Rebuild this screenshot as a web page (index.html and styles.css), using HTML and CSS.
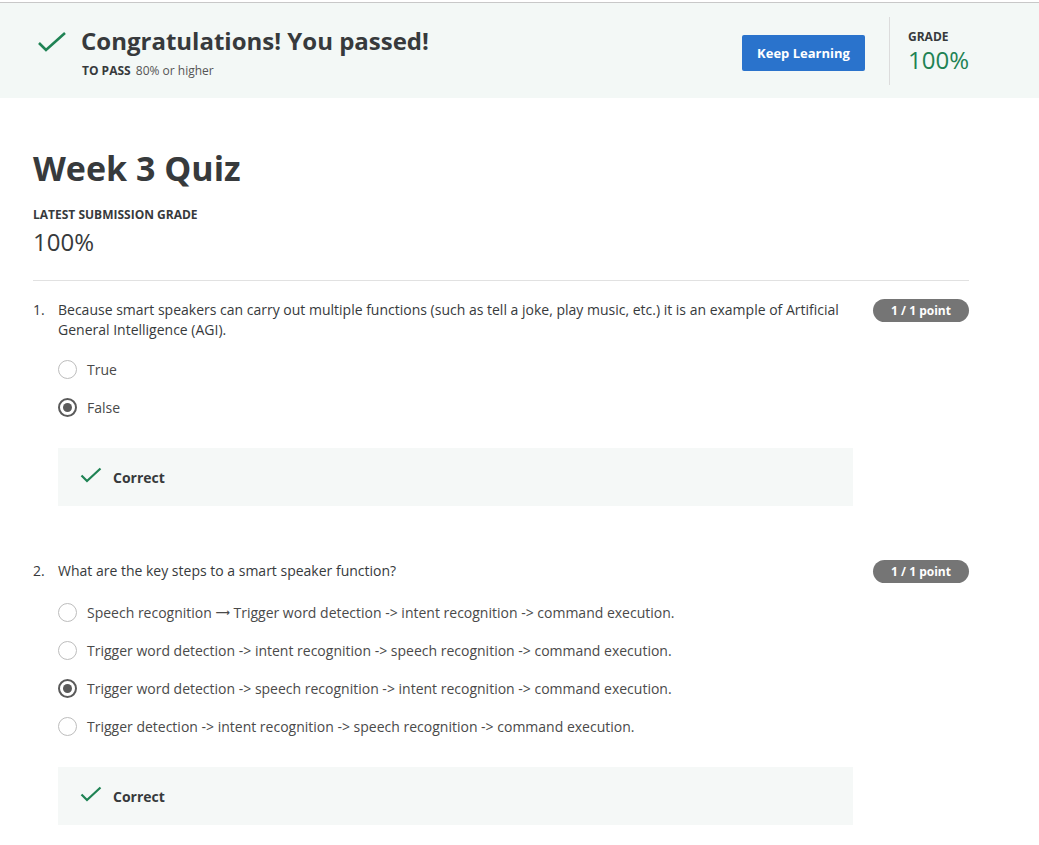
FILE: index.html
```html
<!DOCTYPE html>
<html>
<head>
<meta charset="utf-8">
<link rel="stylesheet" href="styles.css">
</head>
<body>
<div class="topline"></div>
<header class="banner">
  <div class="banner-left">
    <svg class="big-check" width="30" height="22" viewBox="0 0 30 22"><path d="M2 12 L9 19 L28 2" fill="none" stroke="#1f8354" stroke-width="2.6"/></svg>
    <div>
      <h1 class="congrats">Congratulations! You passed!</h1>
      <div class="topass"><b>TO PASS</b> 80% or higher</div>
    </div>
  </div>
  <div class="banner-right">
    <button class="keep">Keep Learning</button>
    <div class="divider"></div>
    <div class="grade">
      <div class="label">GRADE</div>
      <div class="grade-val">100%</div>
    </div>
  </div>
</header>
<main class="content">
  <h2 class="title">Week 3 Quiz</h2>
  <div class="label sub">LATEST SUBMISSION GRADE</div>
  <div class="latest">100%</div>
  <hr class="rule">

  <section class="question">
    <div class="qhead">
      <span class="num">1.</span>
      <p class="qtext">Because smart speakers can carry out multiple functions (such as tell a joke, play music, etc.) it is an example of Artificial General Intelligence (AGI).</p>
      <span class="badge">1 / 1 point</span>
    </div>
    <div class="options">
      <div class="opt"><span class="radio"></span>True</div>
      <div class="opt"><span class="radio on"></span>False</div>
    </div>
    <div class="correct">
      <svg width="22" height="16" viewBox="0 0 22 16"><path d="M1.5 8.5 L7 14 L20.5 1.5" fill="none" stroke="#1f8354" stroke-width="2.2"/></svg>
      <span>Correct</span>
    </div>
  </section>

  <section class="question q2">
    <div class="qhead">
      <span class="num">2.</span>
      <p class="qtext">What are the key steps to a smart speaker function?</p>
      <span class="badge">1 / 1 point</span>
    </div>
    <div class="options">
      <div class="opt"><span class="radio"></span>Speech recognition <span class="arrow">⟶</span> Trigger word detection -&gt; intent recognition -&gt; command execution.</div>
      <div class="opt"><span class="radio"></span>Trigger word detection -&gt; intent recognition -&gt; speech recognition -&gt; command execution.</div>
      <div class="opt"><span class="radio on"></span>Trigger word detection -&gt; speech recognition -&gt; intent recognition -&gt; command execution.</div>
      <div class="opt"><span class="radio"></span>Trigger detection -&gt; intent recognition -&gt; speech recognition -&gt; command execution.</div>
    </div>
    <div class="correct">
      <svg width="22" height="16" viewBox="0 0 22 16"><path d="M1.5 8.5 L7 14 L20.5 1.5" fill="none" stroke="#1f8354" stroke-width="2.2"/></svg>
      <span>Correct</span>
    </div>
  </section>
</main>
</body>
</html>
```
FILE: styles.css
```css
* { box-sizing: border-box; }
body {
  margin: 0;
  font-family: "Open Sans", "Noto Sans", sans-serif;
  color: #373a3c;
  background: #fff;
}
.topline {
  height: 3px;
  border-bottom: 1px solid #c8c8c8;
  background: #fff;
}
.banner {
  background: #f3f8f6;
  height: 95px;
  display: flex;
  justify-content: space-between;
  padding: 0 70px 0 37px;
}
.banner-left {
  display: flex;
  align-items: flex-start;
  padding-top: 23px;
}
.big-check { margin-top: 5px; margin-right: 14px; }
.congrats {
  margin: 0;
  font-size: 24px;
  font-weight: 700;
  line-height: 30px;
  color: #373a3c;
}
.topass {
  font-size: 12px;
  margin-top: 6px;
  margin-left: 1px;
  color: #555;
}
.topass b { color: #373a3c; margin-right: 2px; }
.banner-right {
  display: flex;
  align-items: flex-start;
}
.keep {
  background: #2a73cc;
  color: #fff;
  border: none;
  border-radius: 2px;
  width: 123px;
  height: 36px;
  font-family: inherit;
  font-size: 13px;
  font-weight: 700;
  margin-top: 32px;
}
.divider {
  width: 1px;
  height: 68px;
  background: #dcdcdc;
  margin: 14px 18px 0 24px;
}
.grade { padding-top: 25px; }
.label {
  font-size: 12px;
  font-weight: 700;
  color: #373a3c;
}
.grade-val {
  font-size: 24px;
  color: #1f8354;
  line-height: 30px;
  font-weight: 400;
}
.content {
  padding: 0 70px 0 33px;
}
.title {
  font-size: 34px;
  font-weight: 700;
  margin: 47px 0 0;
  line-height: 46px;
}
.sub { margin-top: 15px; }
.latest {
  font-size: 24px;
  line-height: 30px;
  margin-top: 4px;
  font-weight: 400;
}
.rule {
  border: none;
  border-top: 1px solid #e1e1e1;
  margin: 23px 0 0;
}
.question { padding-top: 19px; }
.q2 { padding-top: 55px; }
.qhead {
  display: flex;
  align-items: flex-start;
}
.num {
  width: 25px;
  font-size: 14px;
  line-height: 20px;
}
.qtext {
  margin: 0;
  flex: 1;
  font-size: 14px;
  line-height: 20px;
  padding-right: 20px;
}
.badge {
  background: #757575;
  color: #fff;
  font-size: 12px;
  font-weight: 700;
  border-radius: 12px;
  width: 96px;
  height: 23px;
  line-height: 23px;
  text-align: center;
  flex: none;
  margin-top: -1px;
}
.options {
  padding-left: 25px;
  margin-top: 10px;
}
.opt {
  display: flex;
  align-items: center;
  height: 38px;
  font-size: 14px;
  color: #4a4a4a;
  white-space: pre;
}
.arrow { font-family: "DejaVu Sans", sans-serif; font-size: 10px; font-weight: 700; }
.radio {
  width: 19px;
  height: 19px;
  border-radius: 50%;
  border: 1.5px solid #bdbdbd;
  margin-right: 10px;
  display: inline-flex;
  align-items: center;
  justify-content: center;
}
.radio.on { border: 2px solid #5a5a5a; }
.radio.on::after {
  content: "";
  width: 9px;
  height: 9px;
  border-radius: 50%;
  background: #5a5a5a;
}
.correct {
  margin: 22px 116px 0 25px;
  height: 58px;
  background: #f5f8f7;
  display: flex;
  align-items: center;
  padding-left: 22px;
  font-size: 14px;
  font-weight: 700;
}
.correct svg { margin-right: 11px; margin-top: -5px; }
```
